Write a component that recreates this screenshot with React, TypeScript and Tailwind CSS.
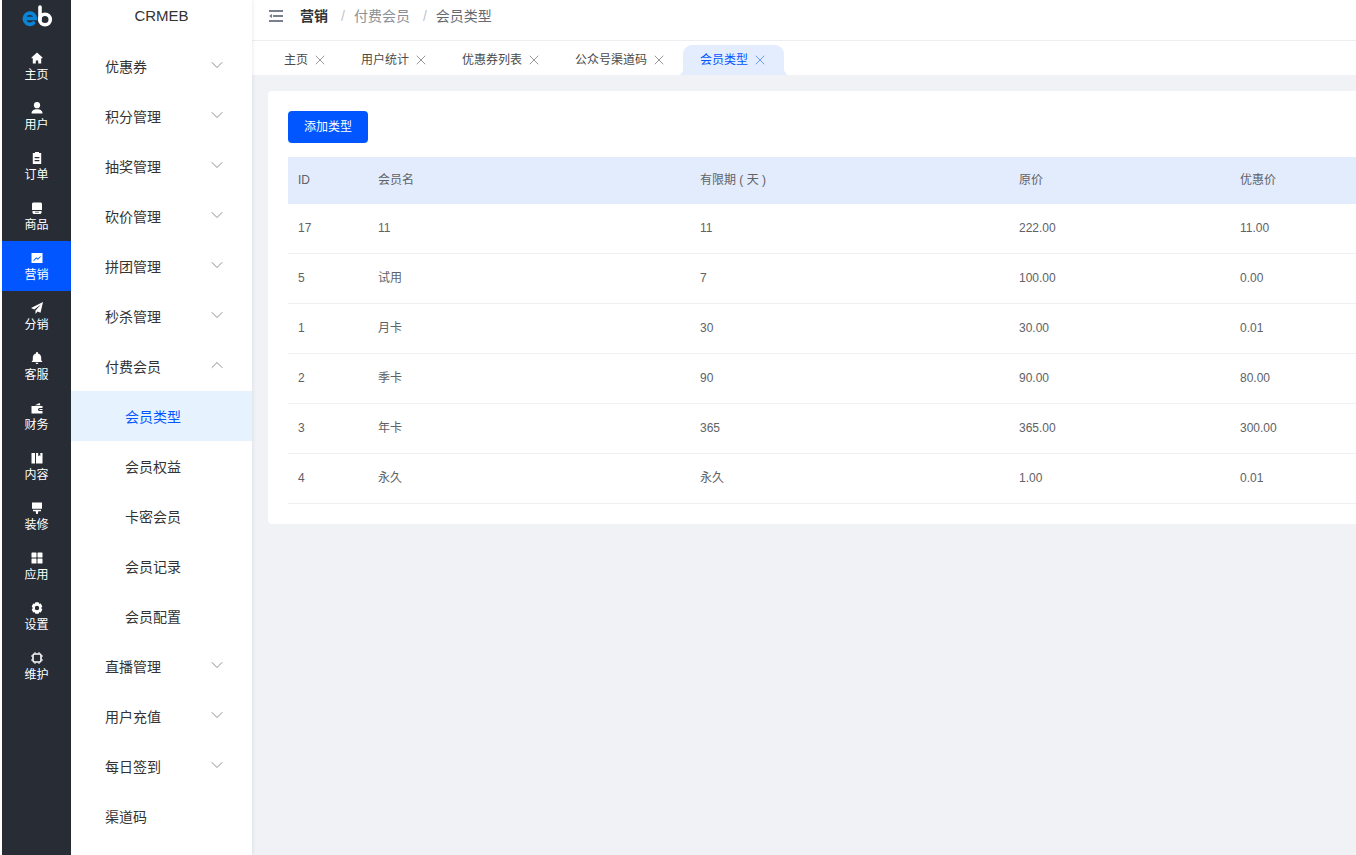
import { ChevronDown, ChevronUp, X } from 'lucide-react';
import type { ReactNode } from 'react';

const railItems: { label: string; icon: ReactNode; active?: boolean }[] = [
  { label: '主页', icon: <path d="M7 1.500 1.500 6.500v.8h1.300V12.500h3V9.500h2.400v3h3V7.300h1.300v-.8z" /> },
  { label: '用户', icon: <><circle cx="7" cy="4.200" r="3.100" /><path d="M1.500 12.500c0-2.800 2.300-4.200 5.500-4.200s5.500 1.400 5.500 4.200z" /></> },
  { label: '订单', icon: <path fillRule="evenodd" d="M5 1h4v1h2.200v11H2.800V2H5zM4.600 6v1.200h4.800V6zm0 3v1.200h4.800V9z" /> },
  { label: '商品', icon: <path fillRule="evenodd" d="M3 1.500h8l1 1v6.500H2V2.500zM2.500 10h9v2l-1 1h-7l-1-1zm2.500.7v.8h4v-.8z" /> },
  { label: '营销', active: true, icon: <path fillRule="evenodd" d="M1.500 2h11v10h-11zm1.800 7.300.6.600 2.500-2.400 1.500 1.300 3-3-.6-.6-2.400 2.400-1.500-1.300z" /> },
  { label: '分销', icon: <path d="M13 1 1 7l3.200 1.500L11 3.500 5.500 9.500V13l2.100-2.500 2.900 1.300z" /> },
  { label: '客服', icon: <path d="M7 1c.6 0 1 .4 1 1v.4c2 .5 3.200 2 3.200 4.100v2.800L12.500 11h-11l1.300-1.700V6.500c0-2.100 1.200-3.600 3.200-4.100V2c0-.6.400-1 1-1zM5.600 11.800h2.800C8.300 12.700 7.700 13 7 13s-1.300-.3-1.400-1.200z" /> },
  { label: '财务', icon: <path fillRule="evenodd" d="M5 4.200 9.500 2l1 2.200zM1.500 5h11v2H9.500a1.500 1.500 0 0 0 0 3h3v2.500h-11zM9.500 8h3v1h-3z" /> },
  { label: '内容', icon: <path d="M1.500 2H5v10.500H1.500zM6 2h2.200v3.200L9.300 4.200l1 1V2h2.200v10.500H6z" /> },
  { label: '装修', icon: <path d="M2 1.500h10v6.300H2zM3 8.700h8v1.500H8.300L7.800 13H6.200l-.5-2.800H3z" /> },
  { label: '应用', icon: <><rect x="1.500" y="1.500" width="5" height="5" rx=".6" /><rect x="7.500" y="1.500" width="5" height="5" rx=".6" /><rect x="1.500" y="7.500" width="5" height="5" rx=".6" /><rect x="7.500" y="7.500" width="5" height="5" rx=".6" /></> },
  { label: '设置', icon: <path fillRule="evenodd" d="M5.400 1.200h3.200l.5 1.600 1.600-.4 1.600 2.800L11.200 7l1.100 1.800-1.600 2.800-1.600-.4-.5 1.600H5.400l-.5-1.600-1.600.4-1.600-2.800L2.800 7 1.700 5.200l1.600-2.800 1.600.4zM7 4.800a2.200 2.200 0 1 0 0 4.400 2.200 2.200 0 0 0 0-4.400z" /> },
  { label: '维护', icon: <><rect x="3" y="3" width="8" height="8" rx="1.500" fill="none" stroke="currentColor" strokeWidth="1.600" /><path d="M4.500 1h1v1.500h-1zM8.500 1h1v1.500h-1zM4.500 11.500h1V13h-1zM8.500 11.500h1V13h-1zM1 4.500h1.500v1H1zM1 8.500h1.500v1H1zM11.500 4.500H13v1h-1.500zM11.500 8.500H13v1h-1.500z" /></> },
];

const menu: { label: string; open?: boolean; noArrow?: boolean; children?: string[] }[] = [
  { label: '优惠券' },
  { label: '积分管理' },
  { label: '抽奖管理' },
  { label: '砍价管理' },
  { label: '拼团管理' },
  { label: '秒杀管理' },
  { label: '付费会员', open: true, children: ['会员类型', '会员权益', '卡密会员', '会员记录', '会员配置'] },
  { label: '直播管理' },
  { label: '用户充值' },
  { label: '每日签到' },
  { label: '渠道码', noArrow: true },
];

const tabs = ['主页', '用户统计', '优惠券列表', '公众号渠道码'];

const rows = [
  { id: '17', name: '11', days: '11', price: '222.00', sale: '11.00' },
  { id: '5', name: '试用', days: '7', price: '100.00', sale: '0.00' },
  { id: '1', name: '月卡', days: '30', price: '30.00', sale: '0.01' },
  { id: '2', name: '季卡', days: '90', price: '90.00', sale: '80.00' },
  { id: '3', name: '年卡', days: '365', price: '365.00', sale: '300.00' },
  { id: '4', name: '永久', days: '永久', price: '1.00', sale: '0.01' },
];

const cols = 'grid grid-cols-[80px_322px_319px_221px_200px] w-[1142px]';

export default function App() {
  return (
    <div className="flex h-[855px] w-[1356px] overflow-hidden bg-white font-['Liberation_Sans','Noto_Sans_CJK_SC',sans-serif]">
      {/* left icon rail */}
      <div className="ml-[2px] w-[69px] shrink-0 bg-[#282c34]">
        <div className="flex h-[41px] items-start justify-center pt-[5px]">
          <svg width="32" height="24" viewBox="0 0 32 24" fill="none">
            <path d="M4 13.500h10.500A5.600 5.600 0 1 0 12.500 18" stroke="#0a84d6" strokeWidth="3.600" strokeLinecap="round" />
            <path d="M19 2v12.500" stroke="#fff" strokeWidth="3.600" strokeLinecap="round" />
            <circle cx="24" cy="14.500" r="5.300" stroke="#fff" strokeWidth="3.600" />
          </svg>
        </div>
        {railItems.map(item => (
          <div
            key={item.label}
            className={`flex h-[50px] flex-col items-center pt-[10px] text-white ${item.active ? 'bg-[#0256ff]' : ''}`}
          >
            <svg width="14" height="14" viewBox="0 0 14 14" fill="currentColor">{item.icon}</svg>
            <span className="mt-[2px] text-[12px] leading-[17px]">{item.label}</span>
          </div>
        ))}
      </div>

      {/* sub menu */}
      <div className="z-10 w-[181px] shrink-0 bg-white shadow-[1px_0_3px_rgba(0,21,41,0.08)]">
        <div className="flex h-[41px] items-start justify-center pt-[7px] text-[15px] leading-[18px] text-[#333]">CRMEB</div>
        {menu.map(m => (
          <div key={m.label}>
            <div className="flex h-[50px] items-center justify-between pl-[34px] pr-[25px] text-[14px] text-[#333]">
              <span className="pt-[2px]">{m.label}</span>
              {!m.noArrow && (m.open
                ? <ChevronUp size={20} strokeWidth={1} className="mb-[2px] text-[#777]" />
                : <ChevronDown size={20} strokeWidth={1} className="mb-[2px] text-[#777]" />)}
            </div>
            {m.children?.map((c, i) => (
              <div
                key={c}
                className={`flex h-[50px] items-center pl-[54px] pt-[2px] text-[14px] ${i === 0 ? 'bg-[#e6f3ff] text-[#0256ff]' : 'text-[#333]'}`}
              >
                {c}
              </div>
            ))}
          </div>
        ))}
      </div>

      {/* main */}
      <div className="flex min-w-0 flex-1 flex-col bg-[#f0f2f6]">
        <div className="flex h-[41px] shrink-0 items-start border-b border-[#eceef2] bg-white pl-[17px] pt-[7px] text-[14px] leading-[18px]">
          <svg width="14" height="12" viewBox="0 0 14 12" fill="#7a7f8e" className="mt-[3px]">
            <rect y="0" width="14" height="2" />
            <rect x="4" y="5" width="10" height="2" />
            <path d="M0 6 3 4v4z" />
            <rect y="10" width="14" height="2" />
          </svg>
          <span className="ml-[17px] font-semibold text-[#303133]">营销</span>
          <span className="ml-[13px] text-[#c0c4cc]">/</span>
          <span className="ml-[9px] text-[#8c8f96]">付费会员</span>
          <span className="ml-[13px] text-[#c0c4cc]">/</span>
          <span className="ml-[9px] text-[#666a70]">会员类型</span>
        </div>

        <div className="flex h-[34px] shrink-0 items-start bg-white pl-[32px] text-[12px]">
          {tabs.map(t => (
            <div key={t} className="mr-[33px] flex h-[34px] items-center gap-[4px] pt-[3px] text-[#4a4a4a]">
              <span>{t}</span>
              <X size={16} strokeWidth={1.300} className="text-[#888]" />
            </div>
          ))}
          <div className="relative ml-[-17px] mt-[4px] flex h-[30px] w-[101px] items-center gap-[4px] rounded-t-[9px] bg-[#e3edfd] pl-[17px] text-[#0256ff]">
            <span>会员类型</span>
            <X size={16} strokeWidth={1.300} className="text-[#5c8ff5]" />
            <span className="absolute bottom-0 left-[-3px] h-[6px] w-[4px] bg-[#e3edfd] [clip-path:polygon(100%_0,100%_100%,0_100%)]" />
            <span className="absolute bottom-0 right-[-3px] h-[6px] w-[4px] bg-[#e3edfd] [clip-path:polygon(0_0,100%_100%,0_100%)]" />
          </div>
        </div>

        <div className="ml-[16px] mt-[16px] h-[433px] w-[1200px] shrink-0 rounded-[4px] bg-white pl-[20px] pt-[20px]">
          <button className="h-[32px] w-[80px] rounded-[4px] bg-[#0256ff] text-[12px] text-white">添加类型</button>
          <div className="mt-[14px] text-[12px] text-[#606266]">
            <div className={`${cols} h-[47px] items-center bg-[#e3ecfd] pb-[2px] pl-[10px]`}>
              <span>ID</span>
              <span>会员名</span>
              <span>有限期 ( 天 )</span>
              <span>原价</span>
              <span>优惠价</span>
            </div>
            {rows.map(r => (
              <div key={r.id} className={`${cols} h-[50px] items-center border-b border-[#eef0f3] bg-white pb-[2px] pl-[10px]`}>
                <span>{r.id}</span>
                <span>{r.name}</span>
                <span>{r.days}</span>
                <span>{r.price}</span>
                <span>{r.sale}</span>
              </div>
            ))}
          </div>
        </div>
      </div>
    </div>
  );
}
